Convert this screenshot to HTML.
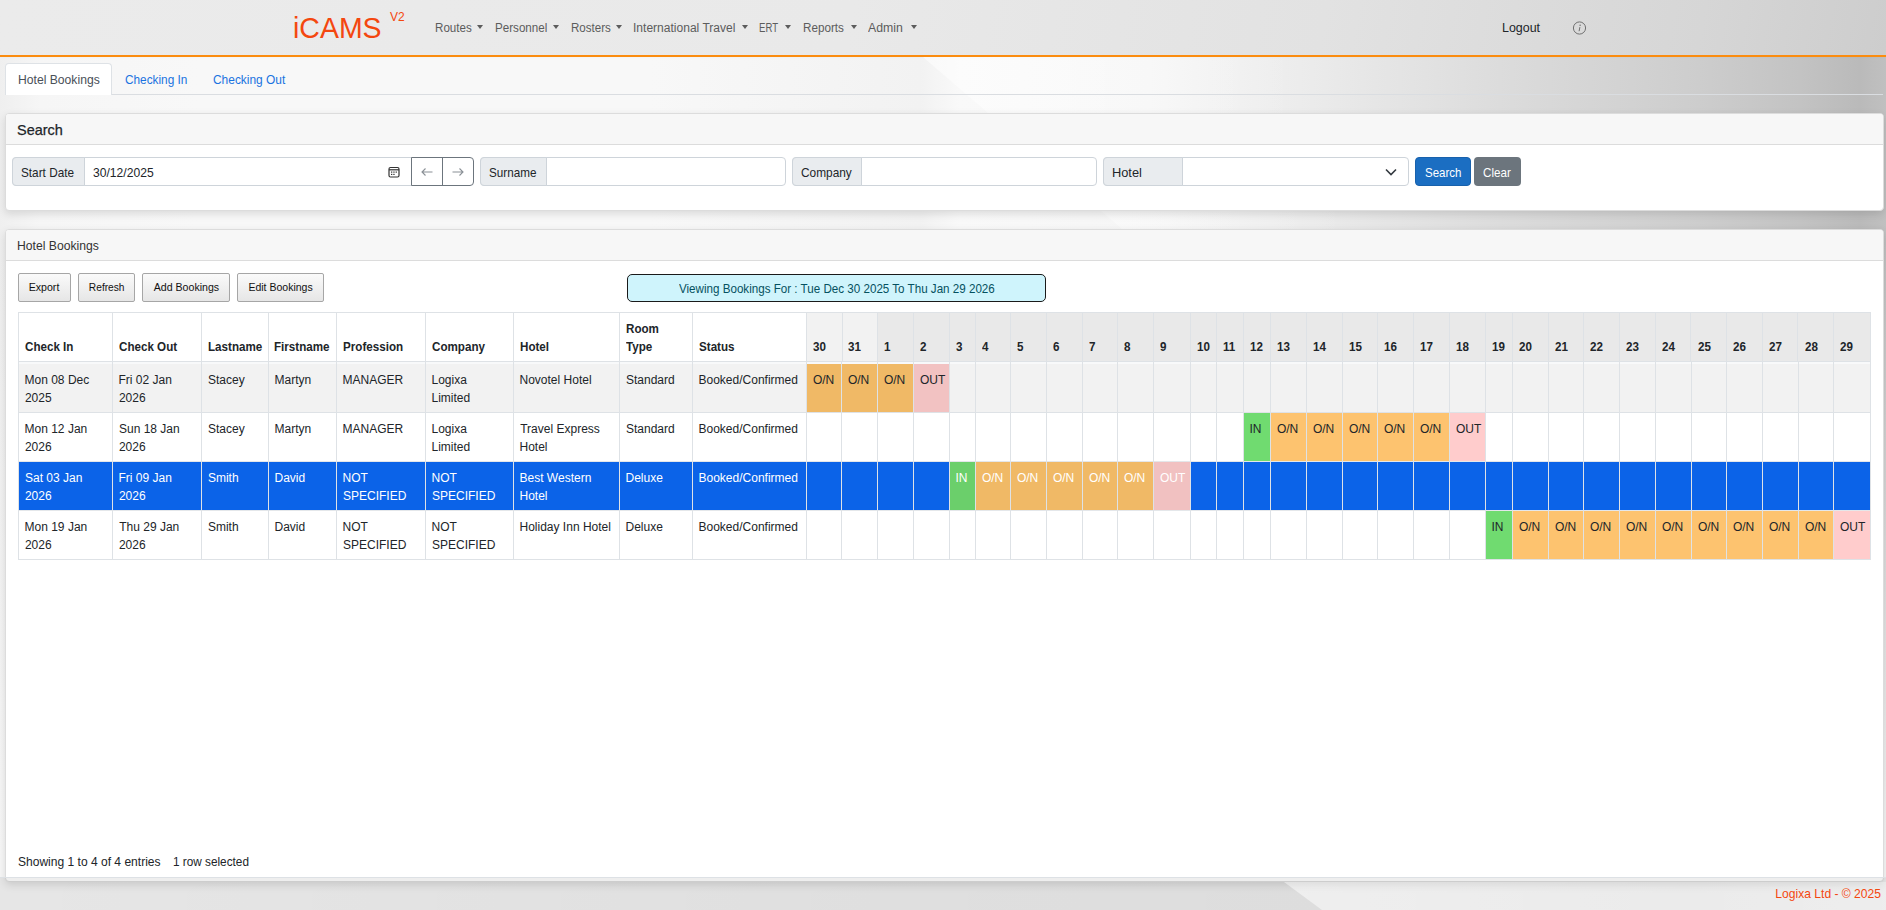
<!DOCTYPE html>
<html><head><meta charset="utf-8"><title>iCAMS</title>
<style>
html,body{margin:0;padding:0;}
body{width:1886px;height:910px;overflow:hidden;position:relative;font-family:'Liberation Sans', sans-serif;
background:linear-gradient(to bottom,rgba(247,247,247,0) 0px,rgba(247,247,247,0) 240px,rgba(247,247,247,1) 860px),linear-gradient(to right,#efefef 0px,#f6f6f6 40px,#f8f8f8 200px,#f8f8f8 650px,#f3f3f3 880px,#f2f2f2 920px,#f9f9f9 960px,#f6f6f6 1150px,#ececec 1300px,#e4e4e4 1400px,#d8d8d8 1550px,#cdcdcd 1700px,#c3c3c3 1800px,#bababa 1860px,#c0c0c0 1886px);}
.t{position:absolute;white-space:nowrap;font-family:'Liberation Sans', sans-serif;}
.r{position:absolute;}
</style></head><body>
<div class="r" style="left:0px;top:0px;width:1886px;height:55px;background:linear-gradient(100deg,#ebebeb 0%,#e9e9e9 45%,#e2e2e2 70%,#d6d6d6 90%,#cdcdcd 100%);box-shadow:0 1px 4px rgba(0,0,0,.05);"></div>
<div class="r" style="left:0px;top:55px;width:1886px;height:2px;background:#fb8c0f;"></div>
<div class="t" style="left:293.09px;top:12px;font-size:30.4px;line-height:30.4px;color:#f4470f;transform:scaleX(0.9370);transform-origin:0 0;">iCAMS</div>
<div class="t" style="left:389.95px;top:11px;font-size:12.0px;line-height:12.0px;color:#f4470f;">V2</div>
<div class="t" style="left:434.65px;top:22px;font-size:12.5px;line-height:12.5px;color:#5c5c5c;transform:scaleX(0.9285);transform-origin:0 0;">Routes</div>
<div class="r" style="left:477px;top:25px;width:0;height:0;border-left:3px solid transparent;border-right:3px solid transparent;border-top:4px solid #5c5c5c;"></div>
<div class="t" style="left:494.85px;top:22px;font-size:12.5px;line-height:12.5px;color:#5c5c5c;transform:scaleX(0.9297);transform-origin:0 0;">Personnel</div>
<div class="r" style="left:553px;top:25px;width:0;height:0;border-left:3px solid transparent;border-right:3px solid transparent;border-top:4px solid #5c5c5c;"></div>
<div class="t" style="left:570.55px;top:22px;font-size:12.5px;line-height:12.5px;color:#5c5c5c;transform:scaleX(0.9258);transform-origin:0 0;">Rosters</div>
<div class="r" style="left:616px;top:25px;width:0;height:0;border-left:3px solid transparent;border-right:3px solid transparent;border-top:4px solid #5c5c5c;"></div>
<div class="t" style="left:633.39px;top:22px;font-size:12.5px;line-height:12.5px;color:#5c5c5c;transform:scaleX(0.9633);transform-origin:0 0;">International Travel</div>
<div class="r" style="left:742px;top:25px;width:0;height:0;border-left:3px solid transparent;border-right:3px solid transparent;border-top:4px solid #5c5c5c;"></div>
<div class="t" style="left:759.21px;top:22px;font-size:12.5px;line-height:12.5px;color:#5c5c5c;transform:scaleX(0.7672);transform-origin:0 0;">ERT</div>
<div class="r" style="left:785px;top:25px;width:0;height:0;border-left:3px solid transparent;border-right:3px solid transparent;border-top:4px solid #5c5c5c;"></div>
<div class="t" style="left:802.54px;top:22px;font-size:12.5px;line-height:12.5px;color:#5c5c5c;transform:scaleX(0.9341);transform-origin:0 0;">Reports</div>
<div class="r" style="left:851px;top:25px;width:0;height:0;border-left:3px solid transparent;border-right:3px solid transparent;border-top:4px solid #5c5c5c;"></div>
<div class="t" style="left:867.98px;top:22px;font-size:12.5px;line-height:12.5px;color:#5c5c5c;transform:scaleX(0.9830);transform-origin:0 0;">Admin</div>
<div class="r" style="left:911px;top:25px;width:0;height:0;border-left:3px solid transparent;border-right:3px solid transparent;border-top:4px solid #5c5c5c;"></div>
<div class="t" style="left:1501.98px;top:22px;font-size:12.6px;line-height:12.6px;color:#212529;transform:scaleX(0.9887);transform-origin:0 0;">Logout</div>
<svg class="r" style="left:1572px;top:21px" width="15" height="15" viewBox="0 0 15 15"><circle cx="7.5" cy="7" r="6.1" fill="none" stroke="#707070" stroke-width="1"/><circle cx="8.1" cy="4.2" r="0.75" fill="#707070"/><path d="M7.9 6.1 L7.1 10.2" stroke="#707070" stroke-width="1" fill="none"/></svg>
<div class="r" style="left:900px;top:57px;width:400px;height:56px;background:linear-gradient(to right,rgba(255,255,255,.55) 0px,rgba(255,255,255,.4) 150px,rgba(255,255,255,0) 400px);clip-path:polygon(23px 0,400px 0,400px 56px,88px 56px);"></div>
<div class="r" style="left:1050px;top:210px;width:300px;height:19px;background:linear-gradient(to right,rgba(255,255,255,.45) 0px,rgba(255,255,255,0) 300px);clip-path:polygon(50px 0,300px 0,300px 19px,72px 19px);"></div>
<div class="r" style="left:5px;top:63px;width:107px;height:32px;background:#fff;border:1px solid #dee2e6;border-bottom:none;border-radius:4px 4px 0 0;box-sizing:border-box;"></div>
<div class="r" style="left:112px;top:94px;width:1771px;height:1px;background:#dadde1;"></div>
<div class="r" style="left:5px;top:94px;width:1px;height:1px;background:#dee2e6;"></div>
<div class="t" style="left:17.70px;top:73px;font-size:13.0px;line-height:13.0px;color:#495057;transform:scaleX(0.9348);transform-origin:0 0;">Hotel Bookings</div>
<div class="t" style="left:124.80px;top:73px;font-size:13.0px;line-height:13.0px;color:#1a73e0;transform:scaleX(0.9085);transform-origin:0 0;">Checking In</div>
<div class="t" style="left:212.79px;top:73px;font-size:13.0px;line-height:13.0px;color:#1a73e0;transform:scaleX(0.9178);transform-origin:0 0;">Checking Out</div>
<div class="r" style="left:5px;top:113px;width:1879px;height:98px;background:#fff;border:1px solid #dcdcdc;border-radius:4px;box-sizing:border-box;box-shadow:0 3px 8px rgba(0,0,0,.12);"></div>
<div class="r" style="left:6px;top:114px;width:1877px;height:30px;background:#f7f7f7;border-radius:3px 3px 0 0;"></div>
<div class="r" style="left:6px;top:144px;width:1877px;height:1px;background:#dcdcdc;"></div>
<div class="t" style="left:17.45px;top:123px;font-size:14.6px;line-height:14.6px;color:#212529;transform:scaleX(0.9900);transform-origin:0 0;-webkit-text-stroke:0.25px #212529;">Search</div>
<div class="r" style="left:12px;top:157px;width:408px;height:29px;background:#fff;border:1px solid #ced4da;border-radius:4px;box-sizing:border-box;"></div>
<div class="r" style="left:12px;top:157px;width:73px;height:29px;background:#e9ecef;border:1px solid #ced4da;border-radius:4px 0 0 4px;box-sizing:border-box;"></div>
<div class="t" style="left:21.47px;top:167px;font-size:12.9px;line-height:12.9px;color:#212529;transform:scaleX(0.9134);transform-origin:0 0;">Start Date</div>
<div class="t" style="left:93.24px;top:167px;font-size:12.9px;line-height:12.9px;color:#212529;transform:scaleX(0.9400);transform-origin:0 0;">30/12/2025</div>
<svg class="r" style="left:388px;top:166px" width="12" height="12" viewBox="0 0 12 12"><rect x="1" y="1.5" width="10" height="9.5" rx="1.5" fill="none" stroke="#333" stroke-width="1.2"/><line x1="1" y1="3.8" x2="11" y2="3.8" stroke="#333" stroke-width="1.2"/><rect x="3" y="5.5" width="1.3" height="1.2" fill="#333"/><rect x="5.3" y="5.5" width="1.3" height="1.2" fill="#333"/><rect x="7.6" y="5.5" width="1.3" height="1.2" fill="#333"/><rect x="3" y="7.8" width="1.3" height="1.2" fill="#333"/><rect x="5.3" y="7.8" width="1.3" height="1.2" fill="#333"/></svg>
<div class="r" style="left:411px;top:157px;width:63px;height:29px;background:#fff;border:1px solid #6c757d;border-radius:0 4px 4px 0;box-sizing:border-box;"></div>
<div class="r" style="left:442px;top:157px;width:1px;height:29px;background:#6c757d;"></div>
<svg class="r" style="left:420px;top:166px" width="14" height="12" viewBox="0 0 14 12"><path d="M12.5 6H2M5.5 2.5L2 6l3.5 3.5" fill="none" stroke="#8a9096" stroke-width="1.1"/></svg>
<svg class="r" style="left:451px;top:166px" width="14" height="12" viewBox="0 0 14 12"><path d="M1.5 6H12M8.5 2.5L12 6l-3.5 3.5" fill="none" stroke="#8a9096" stroke-width="1.1"/></svg>
<div class="r" style="left:480px;top:157px;width:306px;height:29px;background:#fff;border:1px solid #ced4da;border-radius:4px;box-sizing:border-box;"></div>
<div class="r" style="left:480px;top:157px;width:67px;height:29px;background:#e9ecef;border:1px solid #ced4da;border-radius:4px 0 0 4px;box-sizing:border-box;"></div>
<div class="t" style="left:489.47px;top:167px;font-size:12.9px;line-height:12.9px;color:#212529;transform:scaleX(0.9062);transform-origin:0 0;">Surname</div>
<div class="r" style="left:792px;top:157px;width:305px;height:29px;background:#fff;border:1px solid #ced4da;border-radius:4px;box-sizing:border-box;"></div>
<div class="r" style="left:792px;top:157px;width:70px;height:29px;background:#e9ecef;border:1px solid #ced4da;border-radius:4px 0 0 4px;box-sizing:border-box;"></div>
<div class="t" style="left:801.39px;top:167px;font-size:12.9px;line-height:12.9px;color:#212529;transform:scaleX(0.9206);transform-origin:0 0;">Company</div>
<div class="r" style="left:1103px;top:157px;width:306px;height:29px;background:#fff;border:1px solid #ced4da;border-radius:4px;box-sizing:border-box;"></div>
<div class="r" style="left:1103px;top:157px;width:80px;height:29px;background:#e9ecef;border:1px solid #ced4da;border-radius:4px 0 0 4px;box-sizing:border-box;"></div>
<div class="t" style="left:1111.95px;top:167px;font-size:12.9px;line-height:12.9px;color:#212529;transform:scaleX(0.9934);transform-origin:0 0;">Hotel</div>
<svg class="r" style="left:1384px;top:166px" width="14" height="12" viewBox="0 0 14 12"><path d="M2 3.5l5 5 5-5" fill="none" stroke="#343a40" stroke-width="1.6"/></svg>
<div class="r" style="left:1415px;top:157px;width:56px;height:29px;background:#1b6ec2;border:1px solid #1861ac;border-radius:4px;box-sizing:border-box;"></div>
<div class="t" style="left:1425.08px;top:167px;font-size:12.9px;line-height:12.9px;color:#fff;transform:scaleX(0.8923);transform-origin:0 0;">Search</div>
<div class="r" style="left:1474px;top:157px;width:47px;height:29px;background:#6c757d;border-radius:4px;"></div>
<div class="t" style="left:1483.41px;top:167px;font-size:12.9px;line-height:12.9px;color:#fff;transform:scaleX(0.9010);transform-origin:0 0;">Clear</div>
<div class="r" style="left:5px;top:229px;width:1879px;height:653px;background:#fff;border:1px solid #dcdcdc;border-radius:4px;box-sizing:border-box;box-shadow:0 3px 8px rgba(0,0,0,.12);"></div>
<div class="r" style="left:6px;top:230px;width:1877px;height:30px;background:#f7f7f7;border-radius:3px 3px 0 0;"></div>
<div class="r" style="left:6px;top:260px;width:1877px;height:1px;background:#dcdcdc;"></div>
<div class="t" style="left:17.40px;top:240px;font-size:12.9px;line-height:12.9px;color:#333;transform:scaleX(0.9444);transform-origin:0 0;">Hotel Bookings</div>
<div class="r" style="left:18px;top:273px;width:53px;height:29px;background:linear-gradient(to bottom,#fafafa 0%,#e6e6e6 100%);border:1px solid #a6a6a6;border-radius:2px;box-sizing:border-box;"></div>
<div class="t" style="left:28.73px;top:282px;font-size:10.6px;line-height:10.6px;color:#111;">Export</div>
<div class="r" style="left:78px;top:273px;width:57px;height:29px;background:linear-gradient(to bottom,#fafafa 0%,#e6e6e6 100%);border:1px solid #a6a6a6;border-radius:2px;box-sizing:border-box;"></div>
<div class="t" style="left:88.86px;top:283px;font-size:10.2px;line-height:10.2px;color:#111;">Refresh</div>
<div class="r" style="left:142px;top:273px;width:88px;height:29px;background:linear-gradient(to bottom,#fafafa 0%,#e6e6e6 100%);border:1px solid #a6a6a6;border-radius:2px;box-sizing:border-box;"></div>
<div class="t" style="left:153.78px;top:282px;font-size:10.6px;line-height:10.6px;color:#111;">Add Bookings</div>
<div class="r" style="left:237px;top:273px;width:87px;height:29px;background:linear-gradient(to bottom,#fafafa 0%,#e6e6e6 100%);border:1px solid #a6a6a6;border-radius:2px;box-sizing:border-box;"></div>
<div class="t" style="left:248.44px;top:282px;font-size:10.5px;line-height:10.5px;color:#111;">Edit Bookings</div>
<div class="r" style="left:627px;top:274px;width:419px;height:28px;background:#cff4fc;border:1px solid #1a1a1a;border-radius:5px;box-sizing:border-box;"></div>
<div class="t" style="left:678.55px;top:283px;font-size:12.6px;line-height:12.6px;color:#055160;transform:scaleX(0.9224);transform-origin:0 0;">Viewing Bookings For : Tue Dec 30 2025 To Thu Jan 29 2026</div>
<div class="r" style="left:19px;top:313px;width:787px;height:48px;background:#fff;"></div>
<div class="r" style="left:807px;top:313px;width:1063px;height:48px;background:#e9e9e9;"></div>
<div class="r" style="left:807px;top:313px;width:70px;height:48px;background:#f2f2f2;"></div>
<div class="r" style="left:19px;top:362px;width:1851px;height:50px;background:#f2f2f2;"></div>
<div class="r" style="left:807px;top:362px;width:34px;height:50px;background:#f0b966;"></div>
<div class="r" style="left:842px;top:362px;width:35px;height:50px;background:#f0b966;"></div>
<div class="r" style="left:878px;top:362px;width:35px;height:50px;background:#f0b966;"></div>
<div class="r" style="left:914px;top:362px;width:35px;height:50px;background:#f2c2c2;"></div>
<div class="r" style="left:19px;top:413px;width:1851px;height:48px;background:#fff;"></div>
<div class="r" style="left:1244px;top:413px;width:26px;height:48px;background:#70db70;"></div>
<div class="r" style="left:1271px;top:413px;width:35px;height:48px;background:#fdc36f;"></div>
<div class="r" style="left:1307px;top:413px;width:35px;height:48px;background:#fdc36f;"></div>
<div class="r" style="left:1343px;top:413px;width:34px;height:48px;background:#fdc36f;"></div>
<div class="r" style="left:1378px;top:413px;width:35px;height:48px;background:#fdc36f;"></div>
<div class="r" style="left:1414px;top:413px;width:35px;height:48px;background:#fdc36f;"></div>
<div class="r" style="left:1450px;top:413px;width:35px;height:48px;background:#ffcccc;"></div>
<div class="r" style="left:19px;top:462px;width:1851px;height:48px;background:#0b63e8;"></div>
<div class="r" style="left:950px;top:462px;width:25px;height:48px;background:#6bcf6b;"></div>
<div class="r" style="left:976px;top:462px;width:34px;height:48px;background:#f0b966;"></div>
<div class="r" style="left:1011px;top:462px;width:35px;height:48px;background:#f0b966;"></div>
<div class="r" style="left:1047px;top:462px;width:35px;height:48px;background:#f0b966;"></div>
<div class="r" style="left:1083px;top:462px;width:34px;height:48px;background:#f0b966;"></div>
<div class="r" style="left:1118px;top:462px;width:35px;height:48px;background:#f0b966;"></div>
<div class="r" style="left:1154px;top:462px;width:36px;height:48px;background:#f1c1c1;"></div>
<div class="r" style="left:19px;top:511px;width:1851px;height:48px;background:#fff;"></div>
<div class="r" style="left:1486px;top:511px;width:26px;height:48px;background:#70db70;"></div>
<div class="r" style="left:1513px;top:511px;width:35px;height:48px;background:#fdc36f;"></div>
<div class="r" style="left:1549px;top:511px;width:34px;height:48px;background:#fdc36f;"></div>
<div class="r" style="left:1584px;top:511px;width:35px;height:48px;background:#fdc36f;"></div>
<div class="r" style="left:1620px;top:511px;width:35px;height:48px;background:#fdc36f;"></div>
<div class="r" style="left:1656px;top:511px;width:35px;height:48px;background:#fdc36f;"></div>
<div class="r" style="left:1692px;top:511px;width:34px;height:48px;background:#fdc36f;"></div>
<div class="r" style="left:1727px;top:511px;width:35px;height:48px;background:#fdc36f;"></div>
<div class="r" style="left:1763px;top:511px;width:35px;height:48px;background:#fdc36f;"></div>
<div class="r" style="left:1799px;top:511px;width:34px;height:48px;background:#fdc36f;"></div>
<div class="r" style="left:1834px;top:511px;width:36px;height:48px;background:#ffcccc;"></div>
<div class="r" style="left:19px;top:362px;width:1851px;height:2px;background:#f8f9fa;"></div>
<div class="r" style="left:18px;top:312px;width:1853px;height:1px;background:#dee2e6;"></div>
<div class="r" style="left:18px;top:361px;width:1853px;height:1px;background:#dee2e6;"></div>
<div class="r" style="left:18px;top:412px;width:1853px;height:1px;background:#dee2e6;"></div>
<div class="r" style="left:18px;top:461px;width:1853px;height:1px;background:#e4e7ea;"></div>
<div class="r" style="left:18px;top:510px;width:1853px;height:1px;background:#e4e7ea;"></div>
<div class="r" style="left:18px;top:559px;width:1853px;height:1px;background:#dee2e6;"></div>
<div class="r" style="left:18px;top:312px;width:1px;height:49px;background:#dee2e6;"></div>
<div class="r" style="left:18px;top:361px;width:1px;height:199px;background:#dee2e6;"></div>
<div class="r" style="left:112px;top:312px;width:1px;height:49px;background:#dee2e6;"></div>
<div class="r" style="left:112px;top:361px;width:1px;height:199px;background:#dee2e6;"></div>
<div class="r" style="left:201px;top:312px;width:1px;height:49px;background:#dee2e6;"></div>
<div class="r" style="left:201px;top:361px;width:1px;height:199px;background:#dee2e6;"></div>
<div class="r" style="left:268px;top:312px;width:1px;height:49px;background:#dee2e6;"></div>
<div class="r" style="left:268px;top:361px;width:1px;height:199px;background:#dee2e6;"></div>
<div class="r" style="left:336px;top:312px;width:1px;height:49px;background:#dee2e6;"></div>
<div class="r" style="left:336px;top:361px;width:1px;height:199px;background:#dee2e6;"></div>
<div class="r" style="left:425px;top:312px;width:1px;height:49px;background:#dee2e6;"></div>
<div class="r" style="left:425px;top:361px;width:1px;height:199px;background:#dee2e6;"></div>
<div class="r" style="left:513px;top:312px;width:1px;height:49px;background:#dee2e6;"></div>
<div class="r" style="left:513px;top:361px;width:1px;height:199px;background:#dee2e6;"></div>
<div class="r" style="left:619px;top:312px;width:1px;height:49px;background:#dee2e6;"></div>
<div class="r" style="left:619px;top:361px;width:1px;height:199px;background:#dee2e6;"></div>
<div class="r" style="left:692px;top:312px;width:1px;height:49px;background:#dee2e6;"></div>
<div class="r" style="left:692px;top:361px;width:1px;height:199px;background:#dee2e6;"></div>
<div class="r" style="left:806px;top:312px;width:1px;height:49px;background:#dee2e6;"></div>
<div class="r" style="left:806px;top:361px;width:1px;height:199px;background:#dee2e6;"></div>
<div class="r" style="left:842px;top:312px;width:1px;height:49px;background:#dee2e6;"></div>
<div class="r" style="left:841px;top:361px;width:1px;height:199px;background:#dee2e6;"></div>
<div class="r" style="left:877px;top:312px;width:1px;height:49px;background:#dee2e6;"></div>
<div class="r" style="left:877px;top:361px;width:1px;height:199px;background:#dee2e6;"></div>
<div class="r" style="left:913px;top:312px;width:1px;height:49px;background:#dee2e6;"></div>
<div class="r" style="left:913px;top:361px;width:1px;height:199px;background:#dee2e6;"></div>
<div class="r" style="left:949px;top:312px;width:1px;height:49px;background:#dee2e6;"></div>
<div class="r" style="left:949px;top:361px;width:1px;height:199px;background:#dee2e6;"></div>
<div class="r" style="left:975px;top:312px;width:1px;height:49px;background:#dee2e6;"></div>
<div class="r" style="left:975px;top:361px;width:1px;height:199px;background:#dee2e6;"></div>
<div class="r" style="left:1010px;top:312px;width:1px;height:49px;background:#dee2e6;"></div>
<div class="r" style="left:1010px;top:361px;width:1px;height:199px;background:#dee2e6;"></div>
<div class="r" style="left:1046px;top:312px;width:1px;height:49px;background:#dee2e6;"></div>
<div class="r" style="left:1046px;top:361px;width:1px;height:199px;background:#dee2e6;"></div>
<div class="r" style="left:1082px;top:312px;width:1px;height:49px;background:#dee2e6;"></div>
<div class="r" style="left:1082px;top:361px;width:1px;height:199px;background:#dee2e6;"></div>
<div class="r" style="left:1117px;top:312px;width:1px;height:49px;background:#dee2e6;"></div>
<div class="r" style="left:1117px;top:361px;width:1px;height:199px;background:#dee2e6;"></div>
<div class="r" style="left:1153px;top:312px;width:1px;height:49px;background:#dee2e6;"></div>
<div class="r" style="left:1153px;top:361px;width:1px;height:199px;background:#dee2e6;"></div>
<div class="r" style="left:1190px;top:312px;width:1px;height:49px;background:#dee2e6;"></div>
<div class="r" style="left:1190px;top:361px;width:1px;height:199px;background:#dee2e6;"></div>
<div class="r" style="left:1216px;top:312px;width:1px;height:49px;background:#dee2e6;"></div>
<div class="r" style="left:1216px;top:361px;width:1px;height:199px;background:#dee2e6;"></div>
<div class="r" style="left:1243px;top:312px;width:1px;height:49px;background:#dee2e6;"></div>
<div class="r" style="left:1243px;top:361px;width:1px;height:199px;background:#dee2e6;"></div>
<div class="r" style="left:1270px;top:312px;width:1px;height:49px;background:#dee2e6;"></div>
<div class="r" style="left:1270px;top:361px;width:1px;height:199px;background:#dee2e6;"></div>
<div class="r" style="left:1306px;top:312px;width:1px;height:49px;background:#dee2e6;"></div>
<div class="r" style="left:1306px;top:361px;width:1px;height:199px;background:#dee2e6;"></div>
<div class="r" style="left:1342px;top:312px;width:1px;height:49px;background:#dee2e6;"></div>
<div class="r" style="left:1342px;top:361px;width:1px;height:199px;background:#dee2e6;"></div>
<div class="r" style="left:1377px;top:312px;width:1px;height:49px;background:#dee2e6;"></div>
<div class="r" style="left:1377px;top:361px;width:1px;height:199px;background:#dee2e6;"></div>
<div class="r" style="left:1413px;top:312px;width:1px;height:49px;background:#dee2e6;"></div>
<div class="r" style="left:1413px;top:361px;width:1px;height:199px;background:#dee2e6;"></div>
<div class="r" style="left:1449px;top:312px;width:1px;height:49px;background:#dee2e6;"></div>
<div class="r" style="left:1449px;top:361px;width:1px;height:199px;background:#dee2e6;"></div>
<div class="r" style="left:1485px;top:312px;width:1px;height:49px;background:#dee2e6;"></div>
<div class="r" style="left:1485px;top:361px;width:1px;height:199px;background:#dee2e6;"></div>
<div class="r" style="left:1512px;top:312px;width:1px;height:49px;background:#dee2e6;"></div>
<div class="r" style="left:1512px;top:361px;width:1px;height:199px;background:#dee2e6;"></div>
<div class="r" style="left:1548px;top:312px;width:1px;height:49px;background:#dee2e6;"></div>
<div class="r" style="left:1548px;top:361px;width:1px;height:199px;background:#dee2e6;"></div>
<div class="r" style="left:1583px;top:312px;width:1px;height:49px;background:#dee2e6;"></div>
<div class="r" style="left:1583px;top:361px;width:1px;height:199px;background:#dee2e6;"></div>
<div class="r" style="left:1619px;top:312px;width:1px;height:49px;background:#dee2e6;"></div>
<div class="r" style="left:1619px;top:361px;width:1px;height:199px;background:#dee2e6;"></div>
<div class="r" style="left:1655px;top:312px;width:1px;height:49px;background:#dee2e6;"></div>
<div class="r" style="left:1655px;top:361px;width:1px;height:199px;background:#dee2e6;"></div>
<div class="r" style="left:1690px;top:312px;width:1px;height:49px;background:#dee2e6;"></div>
<div class="r" style="left:1691px;top:361px;width:1px;height:199px;background:#dee2e6;"></div>
<div class="r" style="left:1726px;top:312px;width:1px;height:49px;background:#dee2e6;"></div>
<div class="r" style="left:1726px;top:361px;width:1px;height:199px;background:#dee2e6;"></div>
<div class="r" style="left:1762px;top:312px;width:1px;height:49px;background:#dee2e6;"></div>
<div class="r" style="left:1762px;top:361px;width:1px;height:199px;background:#dee2e6;"></div>
<div class="r" style="left:1797px;top:312px;width:1px;height:49px;background:#dee2e6;"></div>
<div class="r" style="left:1798px;top:361px;width:1px;height:199px;background:#dee2e6;"></div>
<div class="r" style="left:1833px;top:312px;width:1px;height:49px;background:#dee2e6;"></div>
<div class="r" style="left:1833px;top:361px;width:1px;height:199px;background:#dee2e6;"></div>
<div class="r" style="left:1870px;top:312px;width:1px;height:49px;background:#dee2e6;"></div>
<div class="r" style="left:1870px;top:361px;width:1px;height:199px;background:#dee2e6;"></div>
<div class="t" style="left:24.72px;top:341px;font-size:12.5px;line-height:12.5px;color:#212529;font-weight:bold;transform:scaleX(0.9300);transform-origin:0 0;">Check In</div>
<div class="t" style="left:119.02px;top:341px;font-size:12.5px;line-height:12.5px;color:#212529;font-weight:bold;transform:scaleX(0.9300);transform-origin:0 0;">Check Out</div>
<div class="t" style="left:207.52px;top:341px;font-size:12.5px;line-height:12.5px;color:#212529;font-weight:bold;transform:scaleX(0.9300);transform-origin:0 0;">Lastname</div>
<div class="t" style="left:274.42px;top:341px;font-size:12.5px;line-height:12.5px;color:#212529;font-weight:bold;transform:scaleX(0.9300);transform-origin:0 0;">Firstname</div>
<div class="t" style="left:342.92px;top:341px;font-size:12.5px;line-height:12.5px;color:#212529;font-weight:bold;transform:scaleX(0.9300);transform-origin:0 0;">Profession</div>
<div class="t" style="left:431.82px;top:341px;font-size:12.5px;line-height:12.5px;color:#212529;font-weight:bold;transform:scaleX(0.9300);transform-origin:0 0;">Company</div>
<div class="t" style="left:519.92px;top:341px;font-size:12.5px;line-height:12.5px;color:#212529;font-weight:bold;transform:scaleX(0.9300);transform-origin:0 0;">Hotel</div>
<div class="t" style="left:699.16px;top:341px;font-size:12.5px;line-height:12.5px;color:#212529;font-weight:bold;transform:scaleX(0.9300);transform-origin:0 0;">Status</div>
<div class="t" style="left:625.62px;top:323px;font-size:12.5px;line-height:12.5px;color:#212529;font-weight:bold;transform:scaleX(0.9300);transform-origin:0 0;">Room</div>
<div class="t" style="left:626.27px;top:341px;font-size:12.5px;line-height:12.5px;color:#212529;font-weight:bold;transform:scaleX(0.9300);transform-origin:0 0;">Type</div>
<div class="t" style="left:813.13px;top:341px;font-size:12.5px;line-height:12.5px;color:#212529;font-weight:bold;transform:scaleX(0.9300);transform-origin:0 0;">30</div>
<div class="t" style="left:848.13px;top:341px;font-size:12.5px;line-height:12.5px;color:#212529;font-weight:bold;transform:scaleX(0.9300);transform-origin:0 0;">31</div>
<div class="t" style="left:883.67px;top:341px;font-size:12.5px;line-height:12.5px;color:#212529;font-weight:bold;transform:scaleX(0.9300);transform-origin:0 0;">1</div>
<div class="t" style="left:919.99px;top:341px;font-size:12.5px;line-height:12.5px;color:#212529;font-weight:bold;transform:scaleX(0.9300);transform-origin:0 0;">2</div>
<div class="t" style="left:956.13px;top:341px;font-size:12.5px;line-height:12.5px;color:#212529;font-weight:bold;transform:scaleX(0.9300);transform-origin:0 0;">3</div>
<div class="t" style="left:982.23px;top:341px;font-size:12.5px;line-height:12.5px;color:#212529;font-weight:bold;transform:scaleX(0.9300);transform-origin:0 0;">4</div>
<div class="t" style="left:1017.04px;top:341px;font-size:12.5px;line-height:12.5px;color:#212529;font-weight:bold;transform:scaleX(0.9300);transform-origin:0 0;">5</div>
<div class="t" style="left:1052.97px;top:341px;font-size:12.5px;line-height:12.5px;color:#212529;font-weight:bold;transform:scaleX(0.9300);transform-origin:0 0;">6</div>
<div class="t" style="left:1088.90px;top:341px;font-size:12.5px;line-height:12.5px;color:#212529;font-weight:bold;transform:scaleX(0.9300);transform-origin:0 0;">7</div>
<div class="t" style="left:1124.03px;top:341px;font-size:12.5px;line-height:12.5px;color:#212529;font-weight:bold;transform:scaleX(0.9300);transform-origin:0 0;">8</div>
<div class="t" style="left:1159.99px;top:341px;font-size:12.5px;line-height:12.5px;color:#212529;font-weight:bold;transform:scaleX(0.9300);transform-origin:0 0;">9</div>
<div class="t" style="left:1197.17px;top:341px;font-size:12.5px;line-height:12.5px;color:#212529;font-weight:bold;transform:scaleX(0.9300);transform-origin:0 0;">10</div>
<div class="t" style="left:1223.17px;top:341px;font-size:12.5px;line-height:12.5px;color:#212529;font-weight:bold;transform:scaleX(0.9300);transform-origin:0 0;">11</div>
<div class="t" style="left:1250.17px;top:341px;font-size:12.5px;line-height:12.5px;color:#212529;font-weight:bold;transform:scaleX(0.9300);transform-origin:0 0;">12</div>
<div class="t" style="left:1277.17px;top:341px;font-size:12.5px;line-height:12.5px;color:#212529;font-weight:bold;transform:scaleX(0.9300);transform-origin:0 0;">13</div>
<div class="t" style="left:1313.17px;top:341px;font-size:12.5px;line-height:12.5px;color:#212529;font-weight:bold;transform:scaleX(0.9300);transform-origin:0 0;">14</div>
<div class="t" style="left:1349.17px;top:341px;font-size:12.5px;line-height:12.5px;color:#212529;font-weight:bold;transform:scaleX(0.9300);transform-origin:0 0;">15</div>
<div class="t" style="left:1384.17px;top:341px;font-size:12.5px;line-height:12.5px;color:#212529;font-weight:bold;transform:scaleX(0.9300);transform-origin:0 0;">16</div>
<div class="t" style="left:1420.17px;top:341px;font-size:12.5px;line-height:12.5px;color:#212529;font-weight:bold;transform:scaleX(0.9300);transform-origin:0 0;">17</div>
<div class="t" style="left:1456.17px;top:341px;font-size:12.5px;line-height:12.5px;color:#212529;font-weight:bold;transform:scaleX(0.9300);transform-origin:0 0;">18</div>
<div class="t" style="left:1492.17px;top:341px;font-size:12.5px;line-height:12.5px;color:#212529;font-weight:bold;transform:scaleX(0.9300);transform-origin:0 0;">19</div>
<div class="t" style="left:1518.99px;top:341px;font-size:12.5px;line-height:12.5px;color:#212529;font-weight:bold;transform:scaleX(0.9300);transform-origin:0 0;">20</div>
<div class="t" style="left:1554.99px;top:341px;font-size:12.5px;line-height:12.5px;color:#212529;font-weight:bold;transform:scaleX(0.9300);transform-origin:0 0;">21</div>
<div class="t" style="left:1589.99px;top:341px;font-size:12.5px;line-height:12.5px;color:#212529;font-weight:bold;transform:scaleX(0.9300);transform-origin:0 0;">22</div>
<div class="t" style="left:1625.99px;top:341px;font-size:12.5px;line-height:12.5px;color:#212529;font-weight:bold;transform:scaleX(0.9300);transform-origin:0 0;">23</div>
<div class="t" style="left:1661.99px;top:341px;font-size:12.5px;line-height:12.5px;color:#212529;font-weight:bold;transform:scaleX(0.9300);transform-origin:0 0;">24</div>
<div class="t" style="left:1697.99px;top:341px;font-size:12.5px;line-height:12.5px;color:#212529;font-weight:bold;transform:scaleX(0.9300);transform-origin:0 0;">25</div>
<div class="t" style="left:1732.99px;top:341px;font-size:12.5px;line-height:12.5px;color:#212529;font-weight:bold;transform:scaleX(0.9300);transform-origin:0 0;">26</div>
<div class="t" style="left:1768.99px;top:341px;font-size:12.5px;line-height:12.5px;color:#212529;font-weight:bold;transform:scaleX(0.9300);transform-origin:0 0;">27</div>
<div class="t" style="left:1804.99px;top:341px;font-size:12.5px;line-height:12.5px;color:#212529;font-weight:bold;transform:scaleX(0.9300);transform-origin:0 0;">28</div>
<div class="t" style="left:1839.99px;top:341px;font-size:12.5px;line-height:12.5px;color:#212529;font-weight:bold;transform:scaleX(0.9300);transform-origin:0 0;">29</div>
<div class="t" style="left:24.52px;top:374px;font-size:12.0px;line-height:12.0px;color:#212529;">Mon 08 Dec</div>
<div class="t" style="left:24.90px;top:392px;font-size:12.0px;line-height:12.0px;color:#212529;">2025</div>
<div class="t" style="left:118.52px;top:374px;font-size:12.0px;line-height:12.0px;color:#212529;">Fri 02 Jan</div>
<div class="t" style="left:118.90px;top:392px;font-size:12.0px;line-height:12.0px;color:#212529;">2026</div>
<div class="t" style="left:207.96px;top:374px;font-size:12.0px;line-height:12.0px;color:#212529;">Stacey</div>
<div class="t" style="left:274.52px;top:374px;font-size:12.0px;line-height:12.0px;color:#212529;">Martyn</div>
<div class="t" style="left:342.52px;top:374px;font-size:12.0px;line-height:12.0px;color:#212529;">MANAGER</div>
<div class="t" style="left:431.52px;top:374px;font-size:12.0px;line-height:12.0px;color:#212529;">Logixa</div>
<div class="t" style="left:431.52px;top:392px;font-size:12.0px;line-height:12.0px;color:#212529;">Limited</div>
<div class="t" style="left:519.52px;top:374px;font-size:12.0px;line-height:12.0px;color:#212529;">Novotel Hotel</div>
<div class="t" style="left:625.96px;top:374px;font-size:12.0px;line-height:12.0px;color:#212529;">Standard</div>
<div class="t" style="left:698.52px;top:374px;font-size:12.0px;line-height:12.0px;color:#212529;">Booked/Confirmed</div>
<div class="t" style="left:812.94px;top:374px;font-size:12.0px;line-height:12.0px;color:#212529;">O/N</div>
<div class="t" style="left:847.94px;top:374px;font-size:12.0px;line-height:12.0px;color:#212529;">O/N</div>
<div class="t" style="left:883.94px;top:374px;font-size:12.0px;line-height:12.0px;color:#212529;">O/N</div>
<div class="t" style="left:919.94px;top:374px;font-size:12.0px;line-height:12.0px;color:#212529;">OUT</div>
<div class="t" style="left:24.52px;top:423px;font-size:12.0px;line-height:12.0px;color:#212529;">Mon 12 Jan</div>
<div class="t" style="left:24.90px;top:441px;font-size:12.0px;line-height:12.0px;color:#212529;">2026</div>
<div class="t" style="left:118.96px;top:423px;font-size:12.0px;line-height:12.0px;color:#212529;">Sun 18 Jan</div>
<div class="t" style="left:118.90px;top:441px;font-size:12.0px;line-height:12.0px;color:#212529;">2026</div>
<div class="t" style="left:207.96px;top:423px;font-size:12.0px;line-height:12.0px;color:#212529;">Stacey</div>
<div class="t" style="left:274.52px;top:423px;font-size:12.0px;line-height:12.0px;color:#212529;">Martyn</div>
<div class="t" style="left:342.52px;top:423px;font-size:12.0px;line-height:12.0px;color:#212529;">MANAGER</div>
<div class="t" style="left:431.52px;top:423px;font-size:12.0px;line-height:12.0px;color:#212529;">Logixa</div>
<div class="t" style="left:431.52px;top:441px;font-size:12.0px;line-height:12.0px;color:#212529;">Limited</div>
<div class="t" style="left:520.24px;top:423px;font-size:12.0px;line-height:12.0px;color:#212529;">Travel Express</div>
<div class="t" style="left:519.52px;top:441px;font-size:12.0px;line-height:12.0px;color:#212529;">Hotel</div>
<div class="t" style="left:625.96px;top:423px;font-size:12.0px;line-height:12.0px;color:#212529;">Standard</div>
<div class="t" style="left:698.52px;top:423px;font-size:12.0px;line-height:12.0px;color:#212529;">Booked/Confirmed</div>
<div class="t" style="left:1249.40px;top:423px;font-size:12.0px;line-height:12.0px;color:#212529;">IN</div>
<div class="t" style="left:1276.94px;top:423px;font-size:12.0px;line-height:12.0px;color:#212529;">O/N</div>
<div class="t" style="left:1312.94px;top:423px;font-size:12.0px;line-height:12.0px;color:#212529;">O/N</div>
<div class="t" style="left:1348.94px;top:423px;font-size:12.0px;line-height:12.0px;color:#212529;">O/N</div>
<div class="t" style="left:1383.94px;top:423px;font-size:12.0px;line-height:12.0px;color:#212529;">O/N</div>
<div class="t" style="left:1419.94px;top:423px;font-size:12.0px;line-height:12.0px;color:#212529;">O/N</div>
<div class="t" style="left:1455.94px;top:423px;font-size:12.0px;line-height:12.0px;color:#212529;">OUT</div>
<div class="t" style="left:24.96px;top:472px;font-size:12.0px;line-height:12.0px;color:#fff;">Sat 03 Jan</div>
<div class="t" style="left:24.90px;top:490px;font-size:12.0px;line-height:12.0px;color:#fff;">2026</div>
<div class="t" style="left:118.52px;top:472px;font-size:12.0px;line-height:12.0px;color:#fff;">Fri 09 Jan</div>
<div class="t" style="left:118.90px;top:490px;font-size:12.0px;line-height:12.0px;color:#fff;">2026</div>
<div class="t" style="left:207.96px;top:472px;font-size:12.0px;line-height:12.0px;color:#fff;">Smith</div>
<div class="t" style="left:274.52px;top:472px;font-size:12.0px;line-height:12.0px;color:#fff;">David</div>
<div class="t" style="left:342.52px;top:472px;font-size:12.0px;line-height:12.0px;color:#fff;">NOT</div>
<div class="t" style="left:342.96px;top:490px;font-size:12.0px;line-height:12.0px;color:#fff;">SPECIFIED</div>
<div class="t" style="left:431.52px;top:472px;font-size:12.0px;line-height:12.0px;color:#fff;">NOT</div>
<div class="t" style="left:431.96px;top:490px;font-size:12.0px;line-height:12.0px;color:#fff;">SPECIFIED</div>
<div class="t" style="left:519.52px;top:472px;font-size:12.0px;line-height:12.0px;color:#fff;">Best Western</div>
<div class="t" style="left:519.52px;top:490px;font-size:12.0px;line-height:12.0px;color:#fff;">Hotel</div>
<div class="t" style="left:625.52px;top:472px;font-size:12.0px;line-height:12.0px;color:#fff;">Deluxe</div>
<div class="t" style="left:698.52px;top:472px;font-size:12.0px;line-height:12.0px;color:#fff;">Booked/Confirmed</div>
<div class="t" style="left:955.40px;top:472px;font-size:12.0px;line-height:12.0px;color:#fff;">IN</div>
<div class="t" style="left:981.94px;top:472px;font-size:12.0px;line-height:12.0px;color:#fff;">O/N</div>
<div class="t" style="left:1016.94px;top:472px;font-size:12.0px;line-height:12.0px;color:#fff;">O/N</div>
<div class="t" style="left:1052.94px;top:472px;font-size:12.0px;line-height:12.0px;color:#fff;">O/N</div>
<div class="t" style="left:1088.94px;top:472px;font-size:12.0px;line-height:12.0px;color:#fff;">O/N</div>
<div class="t" style="left:1123.94px;top:472px;font-size:12.0px;line-height:12.0px;color:#fff;">O/N</div>
<div class="t" style="left:1159.94px;top:472px;font-size:12.0px;line-height:12.0px;color:#fff;">OUT</div>
<div class="t" style="left:24.52px;top:521px;font-size:12.0px;line-height:12.0px;color:#212529;">Mon 19 Jan</div>
<div class="t" style="left:24.90px;top:539px;font-size:12.0px;line-height:12.0px;color:#212529;">2026</div>
<div class="t" style="left:119.24px;top:521px;font-size:12.0px;line-height:12.0px;color:#212529;">Thu 29 Jan</div>
<div class="t" style="left:118.90px;top:539px;font-size:12.0px;line-height:12.0px;color:#212529;">2026</div>
<div class="t" style="left:207.96px;top:521px;font-size:12.0px;line-height:12.0px;color:#212529;">Smith</div>
<div class="t" style="left:274.52px;top:521px;font-size:12.0px;line-height:12.0px;color:#212529;">David</div>
<div class="t" style="left:342.52px;top:521px;font-size:12.0px;line-height:12.0px;color:#212529;">NOT</div>
<div class="t" style="left:342.96px;top:539px;font-size:12.0px;line-height:12.0px;color:#212529;">SPECIFIED</div>
<div class="t" style="left:431.52px;top:521px;font-size:12.0px;line-height:12.0px;color:#212529;">NOT</div>
<div class="t" style="left:431.96px;top:539px;font-size:12.0px;line-height:12.0px;color:#212529;">SPECIFIED</div>
<div class="t" style="left:519.52px;top:521px;font-size:12.0px;line-height:12.0px;color:#212529;">Holiday Inn Hotel</div>
<div class="t" style="left:625.52px;top:521px;font-size:12.0px;line-height:12.0px;color:#212529;">Deluxe</div>
<div class="t" style="left:698.52px;top:521px;font-size:12.0px;line-height:12.0px;color:#212529;">Booked/Confirmed</div>
<div class="t" style="left:1491.40px;top:521px;font-size:12.0px;line-height:12.0px;color:#212529;">IN</div>
<div class="t" style="left:1518.94px;top:521px;font-size:12.0px;line-height:12.0px;color:#212529;">O/N</div>
<div class="t" style="left:1554.94px;top:521px;font-size:12.0px;line-height:12.0px;color:#212529;">O/N</div>
<div class="t" style="left:1589.94px;top:521px;font-size:12.0px;line-height:12.0px;color:#212529;">O/N</div>
<div class="t" style="left:1625.94px;top:521px;font-size:12.0px;line-height:12.0px;color:#212529;">O/N</div>
<div class="t" style="left:1661.94px;top:521px;font-size:12.0px;line-height:12.0px;color:#212529;">O/N</div>
<div class="t" style="left:1697.94px;top:521px;font-size:12.0px;line-height:12.0px;color:#212529;">O/N</div>
<div class="t" style="left:1732.94px;top:521px;font-size:12.0px;line-height:12.0px;color:#212529;">O/N</div>
<div class="t" style="left:1768.94px;top:521px;font-size:12.0px;line-height:12.0px;color:#212529;">O/N</div>
<div class="t" style="left:1804.94px;top:521px;font-size:12.0px;line-height:12.0px;color:#212529;">O/N</div>
<div class="t" style="left:1839.94px;top:521px;font-size:12.0px;line-height:12.0px;color:#212529;">OUT</div>
<div class="t" style="left:17.66px;top:856px;font-size:12.3px;line-height:12.3px;color:#212529;transform:scaleX(0.9789);transform-origin:0 0;">Showing 1 to 4 of 4 entries</div>
<div class="t" style="left:172.80px;top:856px;font-size:12.3px;line-height:12.3px;color:#212529;transform:scaleX(0.9576);transform-origin:0 0;">1 row selected</div>
<div class="r" style="left:0px;top:877px;width:1886px;height:33px;background:rgba(0,0,0,.065);border-top:1px solid #dde1e5;box-sizing:border-box;"></div>
<div class="r" style="left:1284px;top:882px;width:602px;height:28px;background:linear-gradient(to right,rgba(255,255,255,.35),rgba(255,255,255,.2) 400px,rgba(255,255,255,.3));clip-path:polygon(0 0,602px 0,602px 28px,38px 28px);"></div>
<div class="r" style="left:0px;top:882px;width:1330px;height:28px;background:linear-gradient(to right,rgba(0,0,0,0),rgba(0,0,0,.03) 900px,rgba(0,0,0,.04));clip-path:polygon(0 0,1284px 0,1322px 28px,0 28px);"></div>
<div class="t" style="left:1775.31px;top:888px;font-size:12.1px;line-height:12.1px;color:#f4470f;">Logixa Ltd - © 2025</div>
</body></html>
